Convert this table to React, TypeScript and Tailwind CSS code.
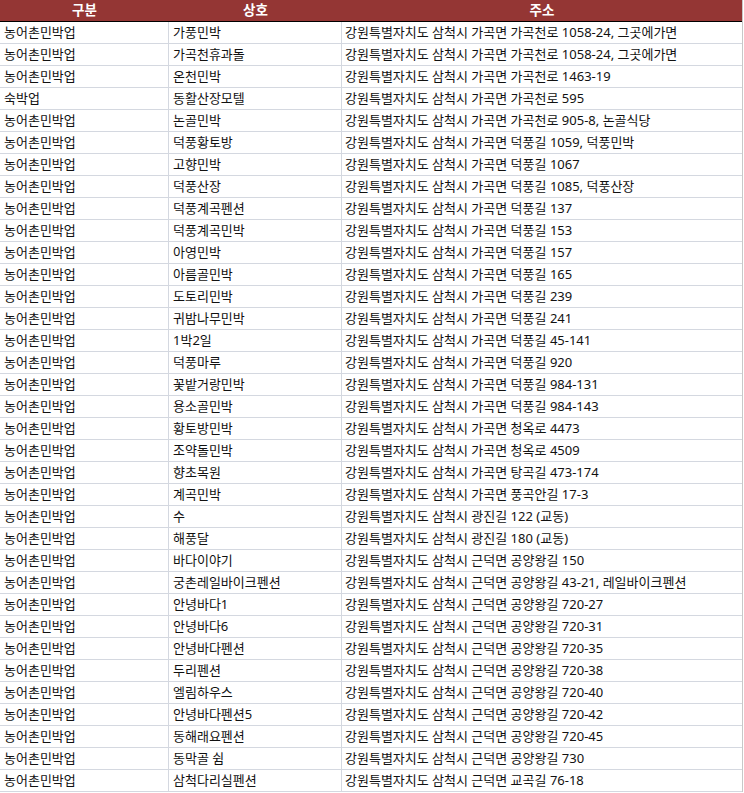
const rows: [string, string, string][] = [
  ["농어촌민박업", "가풍민박", "강원특별자치도 삼척시 가곡면 가곡천로 1058-24, 그곳에가면"],
  ["농어촌민박업", "가곡천휴과돌", "강원특별자치도 삼척시 가곡면 가곡천로 1058-24, 그곳에가면"],
  ["농어촌민박업", "온천민박", "강원특별자치도 삼척시 가곡면 가곡천로 1463-19"],
  ["숙박업", "동활산장모텔", "강원특별자치도 삼척시 가곡면 가곡천로 595"],
  ["농어촌민박업", "논골민박", "강원특별자치도 삼척시 가곡면 가곡천로 905-8, 논골식당"],
  ["농어촌민박업", "덕풍황토방", "강원특별자치도 삼척시 가곡면 덕풍길 1059, 덕풍민박"],
  ["농어촌민박업", "고향민박", "강원특별자치도 삼척시 가곡면 덕풍길 1067"],
  ["농어촌민박업", "덕풍산장", "강원특별자치도 삼척시 가곡면 덕풍길 1085, 덕풍산장"],
  ["농어촌민박업", "덕풍계곡펜션", "강원특별자치도 삼척시 가곡면 덕풍길 137"],
  ["농어촌민박업", "덕풍계곡민박", "강원특별자치도 삼척시 가곡면 덕풍길 153"],
  ["농어촌민박업", "아영민박", "강원특별자치도 삼척시 가곡면 덕풍길 157"],
  ["농어촌민박업", "아름골민박", "강원특별자치도 삼척시 가곡면 덕풍길 165"],
  ["농어촌민박업", "도토리민박", "강원특별자치도 삼척시 가곡면 덕풍길 239"],
  ["농어촌민박업", "귀밤나무민박", "강원특별자치도 삼척시 가곡면 덕풍길 241"],
  ["농어촌민박업", "1박2일", "강원특별자치도 삼척시 가곡면 덕풍길 45-141"],
  ["농어촌민박업", "덕풍마루", "강원특별자치도 삼척시 가곡면 덕풍길 920"],
  ["농어촌민박업", "꽃밭거랑민박", "강원특별자치도 삼척시 가곡면 덕풍길 984-131"],
  ["농어촌민박업", "용소골민박", "강원특별자치도 삼척시 가곡면 덕풍길 984-143"],
  ["농어촌민박업", "황토방민박", "강원특별자치도 삼척시 가곡면 청옥로 4473"],
  ["농어촌민박업", "조약돌민박", "강원특별자치도 삼척시 가곡면 청옥로 4509"],
  ["농어촌민박업", "향초목원", "강원특별자치도 삼척시 가곡면 탕곡길 473-174"],
  ["농어촌민박업", "계곡민박", "강원특별자치도 삼척시 가곡면 풍곡안길 17-3"],
  ["농어촌민박업", "수", "강원특별자치도 삼척시 광진길 122 (교동)"],
  ["농어촌민박업", "해풍달", "강원특별자치도 삼척시 광진길 180 (교동)"],
  ["농어촌민박업", "바다이야기", "강원특별자치도 삼척시 근덕면 공양왕길 150"],
  ["농어촌민박업", "궁촌레일바이크펜션", "강원특별자치도 삼척시 근덕면 공양왕길 43-21, 레일바이크펜션"],
  ["농어촌민박업", "안녕바다1", "강원특별자치도 삼척시 근덕면 공양왕길 720-27"],
  ["농어촌민박업", "안녕바다6", "강원특별자치도 삼척시 근덕면 공양왕길 720-31"],
  ["농어촌민박업", "안녕바다펜션", "강원특별자치도 삼척시 근덕면 공양왕길 720-35"],
  ["농어촌민박업", "두리펜션", "강원특별자치도 삼척시 근덕면 공양왕길 720-38"],
  ["농어촌민박업", "엘림하우스", "강원특별자치도 삼척시 근덕면 공양왕길 720-40"],
  ["농어촌민박업", "안녕바다펜션5", "강원특별자치도 삼척시 근덕면 공양왕길 720-42"],
  ["농어촌민박업", "동해래요펜션", "강원특별자치도 삼척시 근덕면 공양왕길 720-45"],
  ["농어촌민박업", "동막골 쉼", "강원특별자치도 삼척시 근덕면 공양왕길 730"],
  ["농어촌민박업", "삼척다리실펜션", "강원특별자치도 삼척시 근덕면 교곡길 76-18"],
];

export default function App() {
  return (
    <div className="w-[744px] bg-white font-['Noto_Sans','Noto_Sans_CJK_KR',sans-serif] text-[13px] text-[#111]">
      <div className="w-[743px] border-r border-[#c8c8c8]">
        <div className="grid grid-cols-[169px_173px_1fr] h-[22px] bg-[#943634] border-b border-black text-white font-bold text-[13.5px] leading-[21px]">
          <div className="text-center">구분</div>
          <div className="text-center">상호</div>
          <div className="text-center">주소</div>
        </div>
        {rows.map((r, i) => (
          <div key={i} className="grid grid-cols-[169px_173px_1fr] h-[22px] border-b border-[#d4d8e0] leading-[21px]">
            <div className="pl-[4px] border-r border-[#d4d8e0] whitespace-nowrap overflow-hidden">{r[0]}</div>
            <div className="pl-[4px] border-r border-[#d4d8e0] whitespace-nowrap overflow-hidden">{r[1]}</div>
            <div className="pl-[3px] whitespace-nowrap overflow-hidden">{r[2]}</div>
          </div>
        ))}
      </div>
    </div>
  );
}
